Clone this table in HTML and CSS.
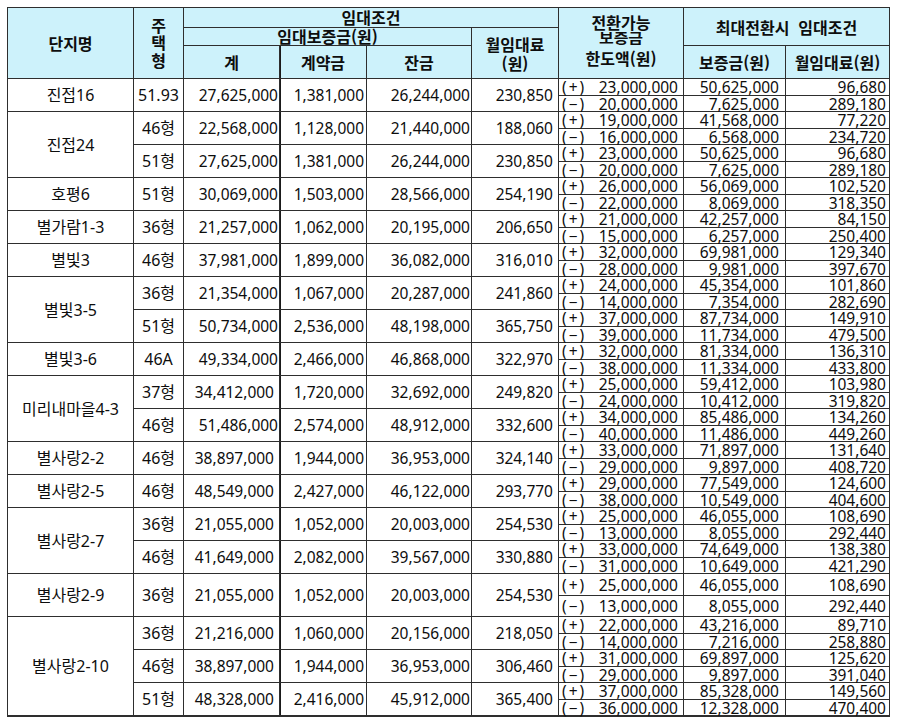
FILE: index.html
```html
<!DOCTYPE html>
<html lang="ko">
<head>
<meta charset="utf-8">
<title>임대조건</title>
<link rel="stylesheet" href="styles.css">
</head>
<body>
<div class="t">
  <div class="h hn">단지명</div>
  <div class="h hty"><span>주</span><span>택</span><span>형</span></div>
  <div class="h hcond">임대조건</div>
  <div class="h hconv"><span class="l1">전환가능</span><span class="l2">보증금</span><span class="l3">한도액(원)</span></div>
  <div class="h hmax">최대전환시&nbsp; 임대조건</div>
  <div class="h hdep">임대보증금(원)</div>
  <div class="h hmon"><span>월임대료</span><span>(원)</span></div>
  <div class="h">계</div>
  <div class="h k">계약금</div>
  <div class="h">잔금</div>
  <div class="h">보증금(원)</div>
  <div class="h">월임대료(원)</div>

  <!-- 진접16 -->
  <div class="c nm s2">진접16</div>
  <div class="c ty s2">51.93</div>
  <div class="c r a1 s2">27,625,000</div>
  <div class="c r a2 k s2">1,381,000</div>
  <div class="c r a3 s2">26,244,000</div>
  <div class="c r a4 s2">230,850</div>
  <div class="c g"><span class="sg">(+)</span><span>23,000,000</span></div>
  <div class="c r b1">50,625,000</div>
  <div class="c r b2">96,680</div>
  <div class="c g"><span class="sg">(−)</span><span>20,000,000</span></div>
  <div class="c r b1">7,625,000</div>
  <div class="c r b2">289,180</div>

  <!-- 진접24 -->
  <div class="c nm s4">진접24</div>
  <div class="c ty s2">46형</div>
  <div class="c r a1 s2">22,568,000</div>
  <div class="c r a2 k s2">1,128,000</div>
  <div class="c r a3 s2">21,440,000</div>
  <div class="c r a4 s2">188,060</div>
  <div class="c g"><span class="sg">(+)</span><span>19,000,000</span></div>
  <div class="c r b1">41,568,000</div>
  <div class="c r b2">77,220</div>
  <div class="c g"><span class="sg">(−)</span><span>16,000,000</span></div>
  <div class="c r b1">6,568,000</div>
  <div class="c r b2">234,720</div>
  <div class="c ty s2">51형</div>
  <div class="c r a1 s2">27,625,000</div>
  <div class="c r a2 k s2">1,381,000</div>
  <div class="c r a3 s2">26,244,000</div>
  <div class="c r a4 s2">230,850</div>
  <div class="c g"><span class="sg">(+)</span><span>23,000,000</span></div>
  <div class="c r b1">50,625,000</div>
  <div class="c r b2">96,680</div>
  <div class="c g"><span class="sg">(−)</span><span>20,000,000</span></div>
  <div class="c r b1">7,625,000</div>
  <div class="c r b2">289,180</div>

  <!-- 호평6 -->
  <div class="c nm s2">호평6</div>
  <div class="c ty s2">51형</div>
  <div class="c r a1 s2">30,069,000</div>
  <div class="c r a2 k s2">1,503,000</div>
  <div class="c r a3 s2">28,566,000</div>
  <div class="c r a4 s2">254,190</div>
  <div class="c g"><span class="sg">(+)</span><span>26,000,000</span></div>
  <div class="c r b1">56,069,000</div>
  <div class="c r b2">102,520</div>
  <div class="c g"><span class="sg">(−)</span><span>22,000,000</span></div>
  <div class="c r b1">8,069,000</div>
  <div class="c r b2">318,350</div>

  <!-- 별가람1-3 -->
  <div class="c nm s2">별가람1-3</div>
  <div class="c ty s2">36형</div>
  <div class="c r a1 s2">21,257,000</div>
  <div class="c r a2 k s2">1,062,000</div>
  <div class="c r a3 s2">20,195,000</div>
  <div class="c r a4 s2">206,650</div>
  <div class="c g"><span class="sg">(+)</span><span>21,000,000</span></div>
  <div class="c r b1">42,257,000</div>
  <div class="c r b2">84,150</div>
  <div class="c g"><span class="sg">(−)</span><span>15,000,000</span></div>
  <div class="c r b1">6,257,000</div>
  <div class="c r b2">250,400</div>

  <!-- 별빛3 -->
  <div class="c nm s2">별빛3</div>
  <div class="c ty s2">46형</div>
  <div class="c r a1 s2">37,981,000</div>
  <div class="c r a2 k s2">1,899,000</div>
  <div class="c r a3 s2">36,082,000</div>
  <div class="c r a4 s2">316,010</div>
  <div class="c g"><span class="sg">(+)</span><span>32,000,000</span></div>
  <div class="c r b1">69,981,000</div>
  <div class="c r b2">129,340</div>
  <div class="c g"><span class="sg">(−)</span><span>28,000,000</span></div>
  <div class="c r b1">9,981,000</div>
  <div class="c r b2">397,670</div>

  <!-- 별빛3-5 -->
  <div class="c nm s4">별빛3-5</div>
  <div class="c ty s2">36형</div>
  <div class="c r a1 s2">21,354,000</div>
  <div class="c r a2 k s2">1,067,000</div>
  <div class="c r a3 s2">20,287,000</div>
  <div class="c r a4 s2">241,860</div>
  <div class="c g"><span class="sg">(+)</span><span>24,000,000</span></div>
  <div class="c r b1">45,354,000</div>
  <div class="c r b2">101,860</div>
  <div class="c g"><span class="sg">(−)</span><span>14,000,000</span></div>
  <div class="c r b1">7,354,000</div>
  <div class="c r b2">282,690</div>
  <div class="c ty s2">51형</div>
  <div class="c r a1 s2">50,734,000</div>
  <div class="c r a2 k s2">2,536,000</div>
  <div class="c r a3 s2">48,198,000</div>
  <div class="c r a4 s2">365,750</div>
  <div class="c g"><span class="sg">(+)</span><span>37,000,000</span></div>
  <div class="c r b1">87,734,000</div>
  <div class="c r b2">149,910</div>
  <div class="c g"><span class="sg">(−)</span><span>39,000,000</span></div>
  <div class="c r b1">11,734,000</div>
  <div class="c r b2">479,500</div>

  <!-- 별빛3-6 -->
  <div class="c nm s2">별빛3-6</div>
  <div class="c ty s2">46A</div>
  <div class="c r a1 s2">49,334,000</div>
  <div class="c r a2 k s2">2,466,000</div>
  <div class="c r a3 s2">46,868,000</div>
  <div class="c r a4 s2">322,970</div>
  <div class="c g"><span class="sg">(+)</span><span>32,000,000</span></div>
  <div class="c r b1">81,334,000</div>
  <div class="c r b2">136,310</div>
  <div class="c g"><span class="sg">(−)</span><span>38,000,000</span></div>
  <div class="c r b1">11,334,000</div>
  <div class="c r b2">433,800</div>

  <!-- 미리내마을4-3 -->
  <div class="c nm s4">미리내마을4-3</div>
  <div class="c ty s2">37형</div>
  <div class="c r a1 p5 s2">34,412,000</div>
  <div class="c r a2 k s2">1,720,000</div>
  <div class="c r a3 s2">32,692,000</div>
  <div class="c r a4 s2">249,820</div>
  <div class="c g"><span class="sg">(+)</span><span>25,000,000</span></div>
  <div class="c r b1">59,412,000</div>
  <div class="c r b2">103,980</div>
  <div class="c g"><span class="sg">(−)</span><span>24,000,000</span></div>
  <div class="c r b1">10,412,000</div>
  <div class="c r b2">319,820</div>
  <div class="c ty s2">46형</div>
  <div class="c r a1 s2">51,486,000</div>
  <div class="c r a2 k s2">2,574,000</div>
  <div class="c r a3 s2">48,912,000</div>
  <div class="c r a4 s2">332,600</div>
  <div class="c g"><span class="sg">(+)</span><span>34,000,000</span></div>
  <div class="c r b1">85,486,000</div>
  <div class="c r b2">134,260</div>
  <div class="c g"><span class="sg">(−)</span><span>40,000,000</span></div>
  <div class="c r b1">11,486,000</div>
  <div class="c r b2">449,260</div>

  <!-- 별사랑2-2 -->
  <div class="c nm s2">별사랑2-2</div>
  <div class="c ty s2">46형</div>
  <div class="c r a1 p5 s2">38,897,000</div>
  <div class="c r a2 k s2">1,944,000</div>
  <div class="c r a3 s2">36,953,000</div>
  <div class="c r a4 s2">324,140</div>
  <div class="c g"><span class="sg">(+)</span><span>33,000,000</span></div>
  <div class="c r b1">71,897,000</div>
  <div class="c r b2">131,640</div>
  <div class="c g"><span class="sg">(−)</span><span>29,000,000</span></div>
  <div class="c r b1">9,897,000</div>
  <div class="c r b2">408,720</div>

  <!-- 별사랑2-5 -->
  <div class="c nm s2">별사랑2-5</div>
  <div class="c ty s2">46형</div>
  <div class="c r a1 p5 s2">48,549,000</div>
  <div class="c r a2 k s2">2,427,000</div>
  <div class="c r a3 s2">46,122,000</div>
  <div class="c r a4 s2">293,770</div>
  <div class="c g"><span class="sg">(+)</span><span>29,000,000</span></div>
  <div class="c r b1">77,549,000</div>
  <div class="c r b2">124,600</div>
  <div class="c g"><span class="sg">(−)</span><span>38,000,000</span></div>
  <div class="c r b1">10,549,000</div>
  <div class="c r b2">404,600</div>

  <!-- 별사랑2-7 -->
  <div class="c nm s4">별사랑2-7</div>
  <div class="c ty s2">36형</div>
  <div class="c r a1 p5 s2">21,055,000</div>
  <div class="c r a2 k s2">1,052,000</div>
  <div class="c r a3 s2">20,003,000</div>
  <div class="c r a4 s2">254,530</div>
  <div class="c g"><span class="sg">(+)</span><span>25,000,000</span></div>
  <div class="c r b1">46,055,000</div>
  <div class="c r b2">108,690</div>
  <div class="c g"><span class="sg">(−)</span><span>13,000,000</span></div>
  <div class="c r b1">8,055,000</div>
  <div class="c r b2">292,440</div>
  <div class="c ty s2">46형</div>
  <div class="c r a1 p5 s2">41,649,000</div>
  <div class="c r a2 k s2">2,082,000</div>
  <div class="c r a3 s2">39,567,000</div>
  <div class="c r a4 s2">330,880</div>
  <div class="c g"><span class="sg">(+)</span><span>33,000,000</span></div>
  <div class="c r b1">74,649,000</div>
  <div class="c r b2">138,380</div>
  <div class="c g"><span class="sg">(−)</span><span>31,000,000</span></div>
  <div class="c r b1">10,649,000</div>
  <div class="c r b2">421,290</div>

  <!-- 별사랑2-9 -->
  <div class="c nm s2">별사랑2-9</div>
  <div class="c ty s2">36형</div>
  <div class="c r a1 p5 s2">21,055,000</div>
  <div class="c r a2 k s2">1,052,000</div>
  <div class="c r a3 s2">20,003,000</div>
  <div class="c r a4 s2">254,530</div>
  <div class="c g"><span class="sg">(+)</span><span>25,000,000</span></div>
  <div class="c r b1">46,055,000</div>
  <div class="c r b2">108,690</div>
  <div class="c g"><span class="sg">(−)</span><span>13,000,000</span></div>
  <div class="c r b1">8,055,000</div>
  <div class="c r b2">292,440</div>

  <!-- 별사랑2-10 -->
  <div class="c nm s6">별사랑2-10</div>
  <div class="c ty s2">36형</div>
  <div class="c r a1 p5 s2">21,216,000</div>
  <div class="c r a2 k s2">1,060,000</div>
  <div class="c r a3 s2">20,156,000</div>
  <div class="c r a4 s2">218,050</div>
  <div class="c g"><span class="sg">(+)</span><span>22,000,000</span></div>
  <div class="c r b1">43,216,000</div>
  <div class="c r b2">89,710</div>
  <div class="c g"><span class="sg">(−)</span><span>14,000,000</span></div>
  <div class="c r b1">7,216,000</div>
  <div class="c r b2">258,880</div>
  <div class="c ty s2">46형</div>
  <div class="c r a1 p5 s2">38,897,000</div>
  <div class="c r a2 k s2">1,944,000</div>
  <div class="c r a3 s2">36,953,000</div>
  <div class="c r a4 s2">306,460</div>
  <div class="c g"><span class="sg">(+)</span><span>31,000,000</span></div>
  <div class="c r b1">69,897,000</div>
  <div class="c r b2">125,620</div>
  <div class="c g"><span class="sg">(−)</span><span>29,000,000</span></div>
  <div class="c r b1">9,897,000</div>
  <div class="c r b2">391,040</div>
  <div class="c ty s2">51형</div>
  <div class="c r a1 p5 s2">48,328,000</div>
  <div class="c r a2 k s2">2,416,000</div>
  <div class="c r a3 s2">45,912,000</div>
  <div class="c r a4 s2">365,400</div>
  <div class="c g"><span class="sg">(+)</span><span>37,000,000</span></div>
  <div class="c r b1">85,328,000</div>
  <div class="c r b2">149,560</div>
  <div class="c g"><span class="sg">(−)</span><span>36,000,000</span></div>
  <div class="c r b1">12,328,000</div>
  <div class="c r b2">470,400</div>
</div>
</body>
</html>
```

FILE: styles.css
```css
html, body {
  margin: 0;
  padding: 0;
  background: #ffffff;
}

body {
  padding: 7px 0 0 7px;
  font-family: "Noto Sans", "Noto Sans CJK KR", sans-serif;
  color: #0d0d0d;
}

.t {
  display: grid;
  width: max-content;
  grid-template-columns: 125px 49px 95px 86px 104px 86px 124px 101px 103px;
  grid-template-rows: 19px 17px 32px repeat(15, 16px 15px) 21px 20px repeat(3, 16px 15px);
  gap: 1px;
  padding: 1px 1px 2px 1px;
  background: #2e2e2e;
}

.h,
.c {
  display: flex;
  align-items: center;
  justify-content: center;
  overflow: visible;
  white-space: nowrap;
}

.h {
  background: #cdf2fb;
  font-family: "Noto Sans CJK KR", "Noto Sans", sans-serif;
  font-weight: 700;
  font-size: 16px;
  line-height: 17px;
  color: #0d0d0d;
}

.hn { grid-row: span 3; padding-top: 1px; }
.hty {
  grid-row: span 3;
  flex-direction: column;
  line-height: 17.5px;
}
.hcond { grid-column: span 4; }
.hconv {
  grid-row: span 3;
  flex-direction: column;
  justify-content: flex-start;
  padding-top: 7px;
}
.hconv .l1 { line-height: 15px; }
.hconv .l2 {
  line-height: 14px;
  display: block;
  transform: scaleY(0.86);
  transform-origin: 50% 45%;
}
.hconv .l3 { line-height: 17px; margin-top: 6px; }
.hmax { grid-column: span 2; grid-row: span 2; padding-top: 1px; }
.hdep { grid-column: span 3; }
.hmon {
  grid-row: span 2;
  flex-direction: column;
  line-height: 19px;
  padding-top: 2px;
}

.c {
  background: #ffffff;
  font-size: 15.5px;
  line-height: 16px;
}

.s2 { grid-row: span 2; }
.s4 { grid-row: span 4; }
.s6 { grid-row: span 6; }

.nm { font-size: 16px; }
.ty { font-size: 16px; }

.r { justify-content: flex-end; }

.a1 { padding-right: 1px; }
.a1.p5 { padding-right: 5px; }
.a2 { padding-right: 2px; }
.a3 { padding-right: 1px; }
.a4 { padding-right: 5px; }

.k { box-shadow: inset 1px 0 0 #1a1a1a; }

.g {
  justify-content: space-between;
  padding: 0 5px 0 3px;
}

.sg { letter-spacing: 2px; }

.b1 { padding-right: 6px; }
.b2 { padding-right: 3px; }
```
